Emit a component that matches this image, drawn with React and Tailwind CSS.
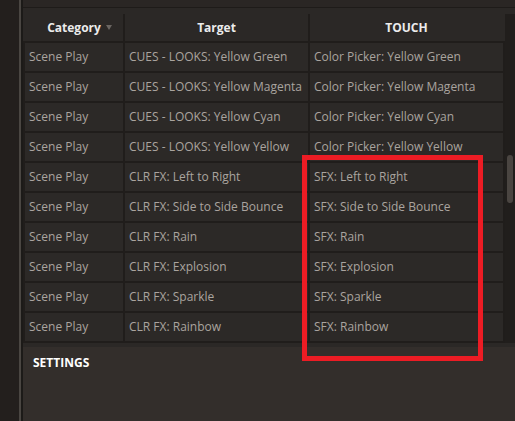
import React from 'react';

const rows = [
  ['Scene Play', 'CUES - LOOKS: Yellow Green', 'Color Picker: Yellow Green'],
  ['Scene Play', 'CUES - LOOKS: Yellow Magenta', 'Color Picker: Yellow Magenta'],
  ['Scene Play', 'CUES - LOOKS: Yellow Cyan', 'Color Picker: Yellow Cyan'],
  ['Scene Play', 'CUES - LOOKS: Yellow Yellow', 'Color Picker: Yellow Yellow'],
  ['Scene Play', 'CLR FX: Left to Right', 'SFX: Left to Right'],
  ['Scene Play', 'CLR FX: Side to Side Bounce', 'SFX: Side to Side Bounce'],
  ['Scene Play', 'CLR FX: Rain', 'SFX: Rain'],
  ['Scene Play', 'CLR FX: Explosion', 'SFX: Explosion'],
  ['Scene Play', 'CLR FX: Sparkle', 'SFX: Sparkle'],
  ['Scene Play', 'CLR FX: Rainbow', 'SFX: Rainbow'],
];

export default function App() {
  return (
    <div
      className="relative w-[515px] h-[421px] flex overflow-hidden bg-[#231f1d] text-[12px]"
      style={{ fontFamily: '"Open Sans", "Noto Sans", sans-serif' }}
    >
      {/* Left gutter */}
      <div className="w-[19px] bg-[#231f1d]" />
      <div className="w-[2px] bg-[#4a4642]" />
      <div className="w-[2px] bg-[#1c1a18]" />

      {/* Main panel */}
      <div className="flex-1 flex flex-col bg-[#2b2826]">
        <div className="h-[7px] bg-[#2a2624]" />
        <div className="h-[1px] bg-[#1e1b19]" />
        <div className="h-[6px]" />

        <div className="flex">
          {/* Table */}
          <div className="w-[482px] flex flex-col">
            {/* Header */}
            <div className="flex h-[27px] font-bold text-[#ececec]">
              <div className="w-[100px] pl-[2px] relative flex items-center justify-center">
                <span>Category</span>
                <span className="absolute right-[11px] top-[11px] w-0 h-0 border-l-[3.5px] border-r-[3.5px] border-t-[5px] border-l-transparent border-r-transparent border-t-[#6b6662]" />
              </div>
              <div className="w-[2px] bg-[#201d1b]" />
              <div className="w-[183px] flex items-center justify-center">Target</div>
              <div className="w-[2px] bg-[#201d1b]" />
              <div className="flex-1 pr-[2px] flex items-center justify-center">TOUCH</div>
            </div>

            {/* Body */}
            <div className="bg-[#201d1b] p-[2px] flex flex-col gap-[2px] text-[#aaa49f]">
              {rows.map((r, i) => (
                <div key={i} className="grid grid-cols-[98px_183px_193px] gap-[2px] h-[28px]">
                  {r.map((c, j) => (
                    <div key={j} className="bg-[#2c2927] pl-[4px] flex items-center whitespace-nowrap overflow-hidden">
                      {c}
                    </div>
                  ))}
                </div>
              ))}
            </div>
          </div>

          {/* Scrollbar */}
          <div className="flex-1 bg-[#211e1c] pt-[141px] flex justify-center">
            <div className="w-[6px] h-[48px] rounded-[3px] bg-[#4a4541]" />
          </div>
        </div>

        <div className="h-[4px]" />

        {/* Settings */}
        <div className="flex-1 bg-[#332e2b] pl-[10px] pt-[8px]">
          <div className="font-bold text-white leading-[16px]">SETTINGS</div>
        </div>
      </div>

      {/* Highlight annotation */}
      <div className="absolute left-[302px] top-[155px] w-[181px] h-[206px] border-[5px] border-[#ec1c24]" />
    </div>
  );
}
